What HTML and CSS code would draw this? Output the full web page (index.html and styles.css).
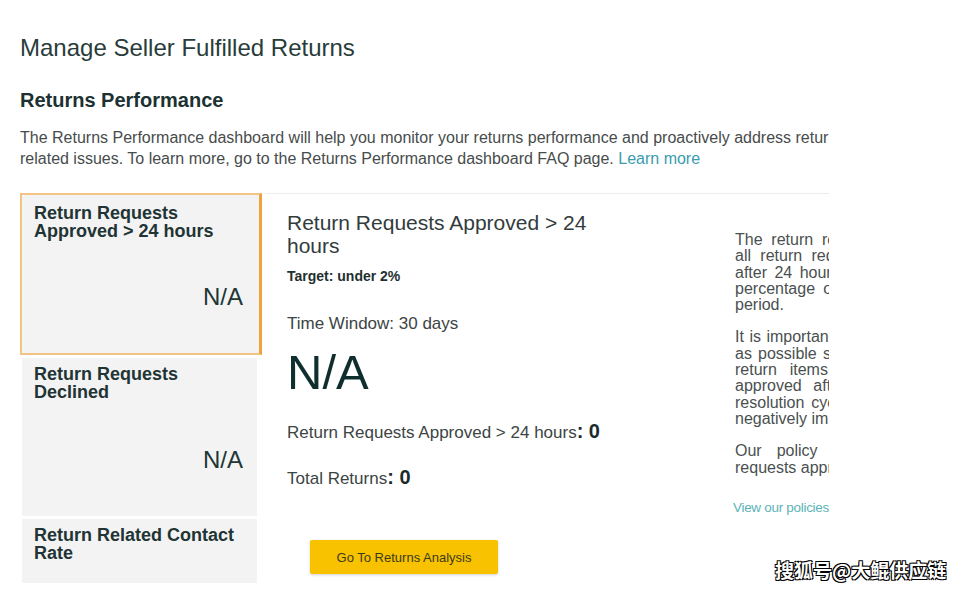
FILE: index.html
```html
<!DOCTYPE html>
<html>
<head>
    <meta charset='utf-8'>
    <title>Manage Seller Fulfilled Returns</title>
    <meta name='viewport' content='width=device-width, initial-scale=1'>
    <link rel="stylesheet" href="styles.css">
</head>
<body>
<section class="fixed-container">
    <h1>Manage Seller Fulfilled Returns</h1>
    <h2>Returns Performance</h2>
    <p class="intro">The Returns Performance dashboard will help you monitor your returns performance and proactively address return<br>
        related issues. To learn more, go to the Returns Performance dashboard FAQ page. <a href="#">Learn more</a></p>

    <div class="dashboard">
        <div class="tabs">
            <div class="tab selected">
                <div class="tab-title">Return Requests Approved &gt; 24 hours</div>
                <div class="tab-value">N/A</div>
            </div>
            <div class="tab">
                <div class="tab-title">Return Requests Declined</div>
                <div class="tab-value">N/A</div>
            </div>
            <div class="tab last">
                <div class="tab-title">Return Related Contact Rate</div>
            </div>
        </div>

        <div class="panel">
            <div class="detail">
                <h3>Return Requests Approved &gt; 24 hours</h3>
                <div class="target">Target: under 2%</div>
                <div class="window">Time Window: 30 days</div>
                <div class="big-value">N/A</div>
                <div class="stat">Return Requests Approved &gt; 24 hours<b>: 0</b></div>
                <div class="stat">Total Returns<b>: 0</b></div>
                <button class="btn-primary">Go To Returns Analysis</button>
            </div>
            <div class="description">
                <p>The return requests metric represents all return requests that you approved after 24 hours of request, shown as a percentage of all requests in the time period.</p>
                <p>It is important to act on returns as soon as possible so that customers can ship return items back quickly. Requests approved after 24 hours extend the resolution cycle for customers and can negatively impact buyer experience.</p>
                <p>Our policy requires that all return requests approved within 24 hours.</p>
                <a class="policies" href="#">View our policies</a>
            </div>
        </div>
    </div>
</section>
<div class="watermark">搜狐号@大鲲供应链</div>
</body>
</html>
```

FILE: styles.css
```css
* {
    font-family: Arial, "Liberation Sans", Helvetica, sans-serif;
    box-sizing: border-box;
}

html, body {
    margin: 0;
    padding: 0;
    background: #fff;
}

body {
    position: relative;
    height: 591px;
    overflow: hidden;
}

.fixed-container {
    width: 809px;
    margin: 0 0 0 20px;
    padding-top: 33px;
    overflow: hidden;
}

h1 {
    margin: 0;
    font-size: 24px;
    font-weight: normal;
    line-height: 30px;
    color: #283c3a;
}

h2 {
    margin: 25px 0 0;
    font-size: 20px;
    line-height: 24px;
    color: #1c3131;
}

.intro {
    margin: 15px 0 0;
    font-size: 16px;
    line-height: 21px;
    color: #474c4c;
    white-space: nowrap;
}

.intro a, .policies {
    color: #3a9cad;
    text-decoration: none;
}

.dashboard {
    display: flex;
    margin-top: 24px;
}

.tabs {
    width: 242px;
    flex-shrink: 0;
    display: flex;
    flex-direction: column;
    gap: 3px;
}

.tab {
    height: 158px;
    margin: 0 5px 0 2px;
    padding: 7px 14px 0 12px;
    background: #f3f3f3;
    display: flex;
    flex-direction: column;
    color: #1f3434;
}

.tab.selected {
    height: 162px;
    margin: 0;
    padding-top: 9px;
    padding-left: 12px;
    border: 2px solid #f4c486;
    border-right: 3px solid #f0a23c;
}

.tab.last {
    height: 64px;
}

.tab-title {
    font-size: 18px;
    font-weight: bold;
    line-height: 18px;
}

.tab-value {
    margin-top: 44px;
    align-self: flex-end;
    font-size: 24px;
    line-height: 26px;
    color: #213636;
}

.tab.selected .tab-value {
    margin-right: 2px;
}

.tab:not(.selected) .tab-value {
    margin-top: 46px;
}

.panel {
    flex: 1;
    display: flex;
    margin-left: 3px;
    padding: 17px 0 0 22px;
    border-top: 1px solid #ececec;
    min-width: 0;
}

.detail {
    width: 320px;
    flex-shrink: 0;
    color: #3c4444;
}

h3 {
    margin: 0;
    font-size: 21px;
    font-weight: normal;
    line-height: 23px;
    color: #323c3c;
}

.target {
    margin-top: 12px;
    font-size: 14px;
    font-weight: bold;
    line-height: 14px;
    color: #1f3030;
}

.window {
    margin-top: 32px;
    font-size: 17px;
    line-height: 18px;
}

.big-value {
    margin-top: 13px;
    font-size: 49px;
    line-height: 52px;
    color: #0f2e2e;
}

.stat {
    margin-top: 22px;
    font-size: 17px;
    line-height: 22px;
}

.stat + .stat {
    margin-top: 22px;
}

.stat b {
    font-size: 20px;
    color: #1b2b2b;
}

.btn-primary {
    display: block;
    margin: 50px 0 0 23px;
    width: 188px;
    height: 34px;
    border: 0;
    border-radius: 2px;
    background: #f8c200;
    box-shadow: 0 1px 3px rgba(0, 0, 0, 0.18);
    font-size: 13px;
    color: #3b3b1c;
}

.description {
    width: 285px;
    flex-shrink: 0;
    margin: 21px 0 0 128px;
    color: #4a5050;
}

.description p {
    margin: 0 0 16px;
    font-size: 16px;
    line-height: 16.3px;
    text-align: justify;
}

.policies {
    display: block;
    margin-top: 24px;
    margin-left: -2px;
    font-size: 13.5px;
    letter-spacing: -0.3px;
    line-height: 16px;
    color: #5cb3b8;
}

.watermark {
    position: absolute;
    left: 775px;
    top: 558px;
    font-family: "Noto Sans CJK SC", sans-serif;
    font-size: 19px;
    font-weight: bold;
    line-height: 24px;
    color: #fff;
    text-shadow: -1px -1px 0 #000, 1px -1px 0 #000, -1px 1px 0 #000, 1px 1px 0 #000;
}
```
